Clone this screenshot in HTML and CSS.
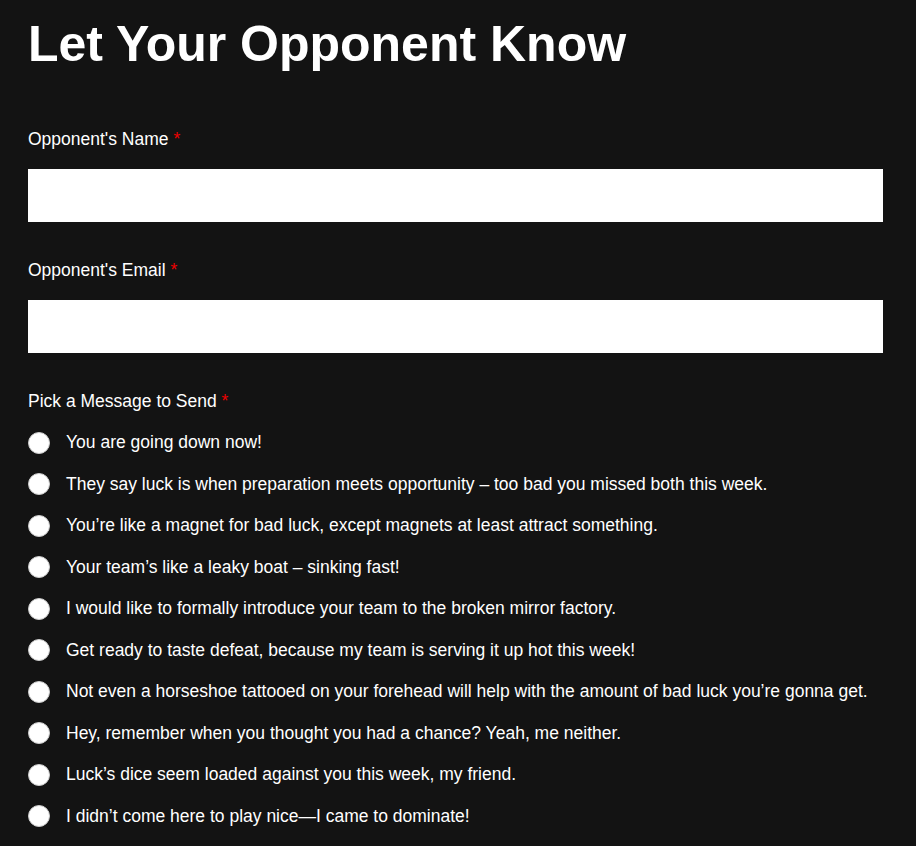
FILE: index.html
```html
<!DOCTYPE html>
<html>
<head>
<meta charset="utf-8">
<title>Let Your Opponent Know</title>
<link rel="stylesheet" href="styles.css">
</head>
<body>
	<div id="container">
		<h1 class="title">Let Your Opponent Know</h1>
		<form class="form">
			<div class="field">
				<label class="label" for="name">Opponent's Name <span class="req">*</span></label>
				<input type="text" id="name" class="input">
			</div>
			<div class="field">
				<label class="label" for="email">Opponent's Email <span class="req">*</span></label>
				<input type="email" id="email" class="input">
			</div>
			<div class="field">
				<div class="label">Pick a Message to Send <span class="req">*</span></div>
				<div class="choices">
					<label class="choice"><input type="radio" name="msg"> <span>You are going down now!</span></label>
					<label class="choice"><input type="radio" name="msg"> <span>They say luck is when preparation meets opportunity – too bad you missed both this week.</span></label>
					<label class="choice"><input type="radio" name="msg"> <span>You’re like a magnet for bad luck, except magnets at least attract something.</span></label>
					<label class="choice"><input type="radio" name="msg"> <span>Your team’s like a leaky boat – sinking fast!</span></label>
					<label class="choice"><input type="radio" name="msg"> <span>I would like to formally introduce your team to the broken mirror factory.</span></label>
					<label class="choice"><input type="radio" name="msg"> <span>Get ready to taste defeat, because my team is serving it up hot this week!</span></label>
					<label class="choice"><input type="radio" name="msg"> <span>Not even a horseshoe tattooed on your forehead will help with the amount of bad luck you’re gonna get.</span></label>
					<label class="choice"><input type="radio" name="msg"> <span>Hey, remember when you thought you had a chance? Yeah, me neither.</span></label>
					<label class="choice"><input type="radio" name="msg"> <span>Luck’s dice seem loaded against you this week, my friend.</span></label>
					<label class="choice"><input type="radio" name="msg"> <span>I didn’t come here to play nice—I came to dominate!</span></label>
				</div>
			</div>
		</form>
	</div>
</body>
</html>
```

FILE: styles.css
```css
html, body {
	margin: 0;
	background: #131313;
	color: #fff;
	font-family: "Liberation Sans", Arial, sans-serif;
}

#container {
	width: 855px;
	padding: 12px 0 0 28px;
}

.title {
	margin: 0;
	font-size: 50px;
	font-weight: bold;
	line-height: 64px;
}

.form {
	margin-top: 53px;
}

.field {
	margin-bottom: 38px;
}

.label {
	display: block;
	font-size: 17.5px;
	line-height: 20px;
	margin-bottom: 20px;
}

.req {
	color: #e00;
}

.input {
	display: block;
	box-sizing: border-box;
	width: 855px;
	height: 53px;
	border: none;
	background: #fff;
	margin: 0;
}

.choices {
	margin-top: -9px;
}

.choice {
	display: flex;
	align-items: center;
	gap: 16px;
	height: 41.5px;
	font-size: 17.5px;
}

.choice input {
	appearance: none;
	-webkit-appearance: none;
	margin: 0;
	width: 22px;
	height: 22px;
	border-radius: 50%;
	background: #fff;
	border: 1px solid #ccc;
	box-sizing: border-box;
}
```
